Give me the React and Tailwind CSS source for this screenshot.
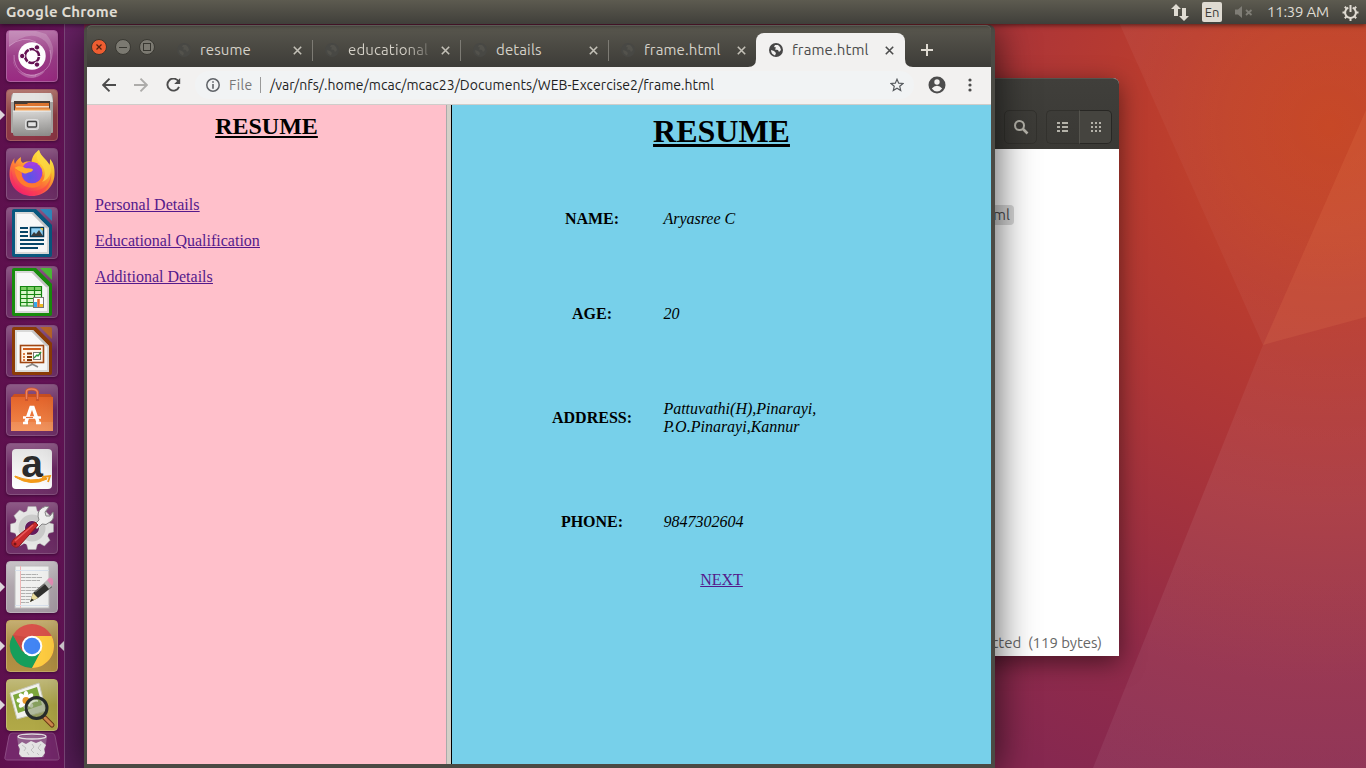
import React from "react";

const UI = "font-['Ubuntu','Noto_Sans','Open_Sans',sans-serif]";

function Wallpaper() {
  return (
    <svg className="absolute inset-0" width="1366" height="768" viewBox="0 0 1366 768">
      <defs>
        <linearGradient id="wl" x1="0" y1="0" x2="0" y2="1">
          <stop offset="0" stopColor="#6a2266" />
          <stop offset="1" stopColor="#571d58" />
        </linearGradient>
        <radialGradient id="wr" gradientUnits="userSpaceOnUse" cx="1330" cy="125" r="700">
          <stop offset="0" stopColor="#c74827" />
          <stop offset="0.15" stopColor="#c1432a" />
          <stop offset="0.26" stopColor="#ba3c2e" />
          <stop offset="0.45" stopColor="#ae3637" />
          <stop offset="0.65" stopColor="#9e3040" />
          <stop offset="0.8" stopColor="#912b49" />
          <stop offset="1" stopColor="#862850" />
        </radialGradient>
        <radialGradient id="wo" gradientUnits="userSpaceOnUse" cx="1330" cy="125" r="640">
          <stop offset="0" stopColor="#fff" stopOpacity="0" />
          <stop offset="0.3" stopColor="#fff" stopOpacity="0.04" />
          <stop offset="0.6" stopColor="#fff" stopOpacity="0.07" />
          <stop offset="1" stopColor="#fff" stopOpacity="0.06" />
        </radialGradient>
      </defs>
      <rect width="84" height="768" fill="url(#wl)" />
      <rect x="84" width="1282" height="768" fill="url(#wr)" />
      <path d="M1109 0H1366V768H1093L1263 345Z" fill="url(#wo)" />
      <path d="M1366 110L1263 345L1366 317Z" fill="#f08a60" fillOpacity="0.15" />
    </svg>
  );
}

function TopPanel() {
  return (
    <header className={`relative z-30 flex h-6 items-center bg-gradient-to-b from-[#5d5b50] to-[#403f3a] pl-[6px] pr-[7px] text-[#dfdbd2] shadow-[0_1px_5px_rgba(0,0,0,0.6)] ${UI}`}>
      <span className="text-[15px] font-bold leading-6 tracking-[0.22px]">Google Chrome</span>
      <div className="ml-auto flex items-center">
        <svg width="18" height="18" viewBox="0 0 18 18" fill="#dfdbd2">
          <path d="M5 1L10 6H7V13H3V6H0ZM13 18L8 13H11V5H15V13H18Z" />
        </svg>
        <span className="ml-[13px] flex h-5 w-5 items-center justify-center rounded-[2px] bg-[#dfdbd2] text-[13px] leading-5 text-[#3c3b37]">En</span>
        <svg className="ml-[13px]" width="18" height="14" viewBox="0 0 18 14">
          <path d="M0 4.5H3L7 1V13L3 9.5H0Z" fill="#7f7d76" />
          <path d="M11 5L16.5 10M16.5 5L11 10" stroke="#7f7d76" strokeWidth="1.8" />
        </svg>
        <span className="ml-[14px] w-[63px] whitespace-nowrap text-[15px] leading-6 tracking-[-0.25px]">11:39 AM</span>
        <svg className="ml-[12px]" width="17" height="17" viewBox="0 0 17 17" fill="none" stroke="#dfdbd2">
          <path d="M6.3 3.6A5.4 5.4 0 1 0 10.7 3.6" strokeWidth="2" />
          <path d="M8.5 1V8" strokeWidth="2" />
          <path d="M2.8 2.8L4.6 4.6M14.2 2.8L12.4 4.6M0.5 8.5H3M14 8.5H16.5M2.8 14.2L4.6 12.4M14.2 14.2L12.4 12.4M8.5 14V17" strokeWidth="2" />
        </svg>
      </div>
    </header>
  );
}

function Swirl() {
  return (
    <svg width="52" height="52" viewBox="0 0 52 52">
      <path d="M3 17Q23 -2 39 11Q46 18 44 33Q52 18 40 4L30 1H3Z" fill="#fff" fillOpacity="0.2" />
      <path d="M7 27C6 43 22 49 39 41C28 55 8 47 7 27Z" fill="#fff" fillOpacity="0.25" />
      <path d="M3 16Q17 5 30 12M44 20Q49 39 29 45M8 25Q8 45 30 46" stroke="#e0b4d8" strokeOpacity="0.5" fill="none" />
      <circle cx="26" cy="26" r="13.7" fill="#fff" />
      <circle cx="26" cy="26" r="7" fill="none" stroke="#651253" strokeWidth="2.6" strokeDasharray="13.7 0.96" strokeDashoffset="-1" />
      <g fill="#651253" stroke="#fff" strokeWidth="1">
        <circle cx="16.2" cy="26" r="2.7" /><circle cx="31" cy="17.4" r="2.7" /><circle cx="31" cy="34.6" r="2.7" />
      </g>
    </svg>
  );
}

function FilesIcon() {
  return (
    <svg width="52" height="52" viewBox="0 0 52 52">
      <defs><linearGradient id="cab" x1="0" y1="0" x2="0" y2="1"><stop stopColor="#d6d5d3" /><stop offset="1" stopColor="#8e8d8b" /></linearGradient></defs>
      <path d="M5 9Q5 4 9 4H43Q47 4 47 9V43Q47 44 46 44H6Q5 44 5 43Z" fill="#a8a6a3" />
      <path d="M7 4H45L47 13H5Z" fill="#e4e3e1" />
      <rect x="8" y="12" width="36" height="10" fill="#463b35" />
      <path d="M9 15H21L22 14H43V22H9Z" fill="#dd7530" />
      <rect x="10" y="17" width="33" height="1.500" fill="#f3e0cc" />
      <path d="M9 19.500H44V22H9Z" fill="#efa053" />
      <path d="M7 22H45V45Q45 47 43 47H9Q7 47 7 45Z" fill="url(#cab)" />
      <path d="M7 22H45" stroke="#f6f5f4" />
      <rect x="19.500" y="30.500" width="13" height="10" rx="2" fill="#d0d0d0" stroke="#dedede" />
      <rect x="21.500" y="32.500" width="9" height="5.500" rx="1" fill="#e2e2e2" stroke="#444" strokeWidth="1.400" />
    </svg>
  );
}

function FirefoxIcon() {
  return (
    <svg width="52" height="52" viewBox="0 0 52 52">
      <defs>
        <linearGradient id="ff" x1="0.85" y1="0.05" x2="0.25" y2="1">
          <stop stopColor="#fff14f" /><stop offset="0.3" stopColor="#ffc32e" /><stop offset="0.6" stopColor="#ff7139" /><stop offset="1" stopColor="#eb1878" />
        </linearGradient>
        <radialGradient id="ffp" cx="0.4" cy="0.7" r="0.8"><stop stopColor="#5a55e8" /><stop offset="1" stopColor="#a63be0" /></radialGradient>
      </defs>
      <path d="M33 2C30 4 26 8 25.500 14C22 13 18 14 17 15C15 14 14.500 12 15 9C12 11 10 13 9 16C8 14 8 12 8.500 10C5 15 3.500 20 3.500 27C4 39 13 48 26 48C39 48 48 38 48.500 27C49 19 47 14 44 11C44 14 44 15 43.500 17C41 11 34 8 33 2Z" fill="url(#ff)" />
      <path d="M5 22C8 31 7 42 26 43C38 43 45 35 45 24C47 38 37 47 26 47C12 47 4 36 5 22Z" fill="#ff2d55" fillOpacity="0.4" />
      <circle cx="26" cy="25" r="10.500" fill="url(#ffp)" />
      <path d="M17 19C19 13 27 12 33 16.500C30 16 28 17 28 18C25 17 21 17 19 20Z" fill="#a23fe0" />
      <path d="M8.500 20C12 17 17 18.500 19 20C22 20.500 27 20 27 22C26 24.500 21 24.500 20 25.500C18 26 15 24 8.500 20Z" fill="#ffae2e" />
      <path d="M8.500 20C12 23 14 24 15.500 25C15 31 20 36 27 35.500C33 35 37 30 36 24C40 31 37 38 29 39.500C15 41 9 30 8.500 20Z" fill="#ff7a2f" />
      <path d="M33 2C29 8 31 13 35.500 17C40 22 40 30 36 34C45 31 47 20 43 16Q35 9 33 2Z" fill="#ffdb45" fillOpacity="0.75" />
    </svg>
  );
}

function OfficeIcon({ color, light, children }) {
  return (
    <svg width="52" height="52" viewBox="0 0 52 52">
      <path d="M8 2H30L46 18V48Q46 50 44 50H8Q6 50 6 48V4Q6 2 8 2Z" fill={color} />
      <path d="M9 5H27L43 21V47H9Z" fill="#d9d9d8" />
      <path d="M11 7H26L41 22V45H11Z" fill="#f8f8f8" />
      <path d="M27 5L43 21H40L25 6Z" fill="#c6c6c6" />
      <path d="M34 2H44Q46 2 46 4V14Z" fill={light} />
      {children}
    </svg>
  );
}

const Writer = () => (
  <OfficeIcon color="#09587f" light="#3189bd">
    <path d="M14 21H22M14 25H22M14 29H22M14 33H38M14 37H38M14 41H32" stroke="#064568" strokeWidth="2" />
    <rect x="24.500" y="20.500" width="13" height="9" fill="#8fd0f3" stroke="#063b58" strokeWidth="1.500" />
    <path d="M25 29L28 25L30 27L33 23L37 29Z" fill="#3b3b39" /><path d="M34 21H37V24Z" fill="#e8c43a" />
  </OfficeIcon>
);

const Calc = () => (
  <OfficeIcon color="#188c0d" light="#4dbb38">
    <rect x="14" y="20" width="22" height="20" fill="#d9f7cb" />
    <path d="M14 20H36V24H14Z" fill="#80d067" />
    <path d="M14.500 20V40M21 20V40M28.500 20V40M35.500 20V31M14 20.500H36M14 24.500H36M14 28.500H36M14 32.500H28M14 36.500H28M14 40H28" stroke="#168612" strokeWidth="1.200" />
    <rect x="27.500" y="31.500" width="10" height="10" fill="#fff" stroke="#777" />
    <path d="M29.500 36V41" stroke="#36a9ed" strokeWidth="3" /><path d="M32.500 33V41" stroke="#e66b29" strokeWidth="2.500" /><path d="M35.500 38V41" stroke="#edbd24" strokeWidth="3" />
  </OfficeIcon>
);

const Impress = () => (
  <OfficeIcon color="#8c3c07" light="#b66529">
    <path d="M26 37V39.500L20 42M26 39L32 42" stroke="#888" strokeWidth="1.800" fill="none" />
    <rect x="14.500" y="20.500" width="23" height="17" fill="#fff4e8" stroke="#a14713" strokeWidth="1.600" />
    <path d="M17 24H35" stroke="#ce5d1d" strokeWidth="2" />
    <path d="M17 29H19M17 32H19M17 35H19" stroke="#dd7c43" strokeWidth="2" /><path d="M21 28.500H26M21 32H26M21 35H26" stroke="#823507" strokeWidth="2" />
    <rect x="27.500" y="27.500" width="7" height="7" fill="#fff" stroke="#777" /><path d="M28 33L31 30L32 31L35 27" stroke="#28963c" fill="none" strokeWidth="1.300" />
  </OfficeIcon>
);

function SoftwareIcon() {
  return (
    <svg width="52" height="52" viewBox="0 0 52 52">
      <defs><linearGradient id="bag" x1="0" y1="0" x2="0" y2="1"><stop stopColor="#e4642b" /><stop offset="1" stopColor="#f28a4d" /></linearGradient></defs>
      <path d="M8 10H44L47 14H5Z" fill="#c94f20" /><path d="M5 13H47V47H5Z" fill="url(#bag)" /><path d="M5 38H47V47H5Z" fill="#fff" fillOpacity="0.1" />
      <path d="M20.500 17V8Q20.500 5 25.500 5T31.500 8V17" fill="none" stroke="#cc542e" strokeWidth="3" /><path d="M20.500 15V8Q20.500 5 25.500 5T31.500 8V15" fill="none" stroke="#ec8360" strokeWidth="1.400" />
      <path d="M20 38L25 23.500H27L32 38" fill="none" stroke="#fff" strokeWidth="3.500" />
      <path d="M17 39H22M30 39H35M17 33.500H35" stroke="#fff" strokeWidth="2.400" /><path d="M20 33.500H27" stroke="#e8703a" strokeWidth="1.200" />
    </svg>
  );
}

function AmazonIcon() {
  return (
    <div className="relative flex h-[40px] w-[40px] justify-center rounded-[4px] bg-gradient-to-b from-[#e4e4e4] to-white">
      <span className="-mt-[6px] h-[41px] font-['Liberation_Sans',sans-serif] text-[39px] font-bold leading-[41px] text-[#2b2b2b]">a</span>
      <svg className="absolute left-[2px] top-[25px]" width="38" height="12" viewBox="0 0 38 12">
        <path d="M1 3Q17 13 33 5L32 3.500Q17 9 1 2Z" fill="#f39a18" stroke="#f39a18" />
        <path d="M28 3L36 2L34 8" stroke="#f39a18" strokeWidth="1.800" fill="none" />
      </svg>
    </div>
  );
}

function SettingsIcon() {
  const teeth = [0, 45, 90, 135, 180, 225, 270, 315];
  return (
    <svg width="52" height="52" viewBox="0 0 52 52">
      {teeth.map((a) => <path key={a} d="M20 12L22 4.500H30L32 12Z" fill="#e8e8e7" stroke="#aaa" strokeWidth="0.500" transform={`rotate(${a} 26 26)`} />)}
      <circle cx="26" cy="26" r="12" fill="none" stroke="#e5e5e4" strokeWidth="11" />
      <circle cx="26" cy="26" r="10.500" fill="none" stroke="#cbcbca" strokeWidth="6" />
      <circle cx="26" cy="26" r="7" fill="#631c5d" />
      <path d="M28 23L33 18Q30 10 36 6Q40 3 43 5L39 10L40 14L44 14L47 10Q49 17 44 20Q40 24 36 22L31 27Z" fill="#f1f1f0" stroke="#888" />
      <path d="M29 20L32 23L14 43Q11 47 7 44Q4 41 8 37Z" fill="#c92b2d" stroke="#8f1b20" />
      <path d="M27 23L9 39" stroke="#ea5d5d" strokeWidth="1.500" /><circle cx="9" cy="42" r="1.500" fill="#731519" />
    </svg>
  );
}

function GeditIcon() {
  return (
    <svg width="52" height="52" viewBox="0 0 52 52">
      <rect x="9" y="5" width="34" height="42" fill="#f1f1f0" stroke="#bcbcbc" />
      <path d="M14.500 5V47" stroke="#eeb6b6" /><path d="M9 9.500H43M9 44.500H43" stroke="#d7e0ec" />
      <path d="M15 13.500H32M15 16.500H36M15 19.500H34M15 26.500H36M15 29.500H31M15 32.500H32M15 35.500H26M15 38.500H24M15 41.500H23" stroke="#b0b0b0" strokeWidth="1" strokeDasharray="4 0.500 6 0.500" />
      <path d="M24 41L27 32L41 20L46 26L32 37Z" fill="#31312f" /><path d="M24 41L27 32L32 37Z" fill="#eadc9b" /><path d="M24 41L25.500 37.500L28 39Z" fill="#222" />
      <path d="M29 31L42 20" stroke="#737371" strokeWidth="1.500" /><path d="M38 22L41 19L46 25L43 28Z" fill="#b9b9b7" /><path d="M41 19L43 17Q46 16 47 19T46 25Z" fill="#e78fb8" />
    </svg>
  );
}

function ChromeIcon() {
  return (
    <svg width="52" height="52" viewBox="0 0 52 52">
      <circle cx="26" cy="26" r="22" fill="#d8524a" />
      <path d="M6.900 15A22 22 0 0 0 26 48L36 31L26 36L16 31Z" fill="#169e5b" />
      <path d="M26 16H45.600A22 22 0 0 1 26 48L35 31Z" fill="#ffcd41" />
      <path d="M7 15L16.500 31L20 17Z" fill="#b83d35" fillOpacity="0.4" />
      <circle cx="26" cy="26" r="10.300" fill="#fff" /><circle cx="26" cy="26" r="8.300" fill="#4285f4" />
    </svg>
  );
}

function ViewerIcon() {
  return (
    <svg width="52" height="52" viewBox="0 0 52 52">
      <path d="M4 14L33 4L40 32L11 40Z" fill="#f2f2ed" stroke="#c7c7b7" /><path d="M7 16L31 8L36 26L12 34Z" fill="#7da83c" />
      {[0, 45, 90, 135, 180, 225, 270, 315].map((a) => <ellipse key={a} cx="20" cy="16.500" rx="2.400" ry="4.500" fill="#fff" transform={`rotate(${a} 20 21.500)`} />)}
      <circle cx="20" cy="21.500" r="3.500" fill="#e69728" />
      <path d="M38 38L46 46" stroke="#6d3b17" strokeWidth="5" strokeLinecap="round" /><path d="M39 39L46 46" stroke="#d28a4d" strokeWidth="3" strokeLinecap="round" />
      <circle cx="30.500" cy="29" r="10.500" fill="#8d9b70" fillOpacity="0.65" stroke="#282d2b" strokeWidth="3" /><path d="M23 27Q25 21 32 22" stroke="#d8e0ca" strokeWidth="1.500" fill="none" />
    </svg>
  );
}

function Launcher() {
  const glass = "from-[#8d5a86] via-[#6b2763] to-[#6f3168] border-[#85507e]";
  const items = [
    { icon: <Swirl />, bg: "from-[#b874aa] via-[#9c3e89] to-[#9a2a82] border-[#ae5f9f]" },
    { icon: <FilesIcon />, bg: "from-[#b27770] via-[#8c3e44] to-[#8c3545] border-[#a45c60]", run: true },
    { icon: <FirefoxIcon />, bg: glass },
    { icon: <Writer />, bg: glass },
    { icon: <Calc />, bg: glass },
    { icon: <Impress />, bg: glass },
    { icon: <SoftwareIcon />, bg: glass },
    { icon: <AmazonIcon />, bg: glass },
    { icon: <SettingsIcon />, bg: glass },
    { icon: <GeditIcon />, bg: "from-[#c7c2c6] via-[#b0a6ad] to-[#a69ba4] border-[#bcb1ba]", run: true },
    { icon: <ChromeIcon />, bg: "from-[#c5ae71] via-[#a98b42] to-[#b39043] border-[#c4a965]", run: true, focus: true },
    { icon: <ViewerIcon />, bg: "from-[#c0b979] via-[#aaa244] to-[#b1a947] border-[#c3bb6e]", run: true },
  ];
  return (
    <nav className="relative z-10 flex h-[744px] w-[65px] flex-col gap-[7px] border-r border-[#804b7e] bg-gradient-to-r from-[#5d104d] to-[#68145b] pl-[6px] pt-[6px]">
      {items.map((it, i) => (
        <div key={i} className={`relative flex h-[52px] w-[52px] shrink-0 items-center justify-center rounded-[4px] border bg-gradient-to-b shadow-[0_1px_3px_rgba(30,0,30,0.5)] ${it.bg}`}>
          <div className="-m-px flex h-[52px] w-[52px] shrink-0 items-center justify-center">{it.icon}</div>
          {it.run && <svg className="absolute -left-[7px] top-[20px]" width="5" height="10" viewBox="0 0 5 10"><path d="M0 0L5 5L0 10Z" fill="#ddd5db" /></svg>}
          {it.focus && <svg className="absolute -right-[7px] top-[20px]" width="5" height="10" viewBox="0 0 5 10"><path d="M5 0L0 5L5 10Z" fill="#ddd5db" /></svg>}
        </div>
      ))}
      <svg className="-ml-[2px] -mt-[6px] shrink-0" width="56" height="31" viewBox="0 0 56 31">
        <path d="M8 1H48Q50 1 51 4L55 25Q56 28 52 28H4Q0 28 1 25L5 4Q6 1 8 1Z" fill="#74286b" stroke="#8c4c84" />
        <path d="M13 5Q28 1 43 5L40 25Q28 27 16 25Z" fill="#c0b4c0" fillOpacity="0.4" />
        <ellipse cx="28" cy="4.500" rx="14" ry="2.500" fill="none" stroke="#e4dfe3" strokeWidth="1.300" />
        <path d="M14 13L18 10L22 12L27 9L32 11L37 9L42 13L40 17L41 21L38 25H18L15 22L16 17Z" fill="#e4e4e4" />
        <path d="M18 13L22 16L20 19M28 12L30 15L27 18L30 21M37 12L34 16L37 19M23 20L25 23M33 21L35 23" stroke="#bcbcbc" strokeWidth="0.900" fill="none" />
      </svg>
    </nav>
  );
}

function FilesWindow() {
  return (
    <section className={`absolute left-[900px] top-[78px] z-0 flex h-[578px] w-[219px] flex-col rounded-tr-[6px] bg-white shadow-[0_6px_24px_rgba(0,0,0,0.5)] ${UI}`}>
      <div className="flex h-[71px] items-end justify-end rounded-tr-[6px] border-t border-[#55544e] bg-gradient-to-b from-[#403f3b] to-[#3a3935] pb-[5px] pr-[7px]">
        <div className="mr-[9px] flex h-[34px] w-[33px] items-center justify-center rounded-[5px] border border-[#32312d]">
          <svg width="16" height="16" viewBox="0 0 16 16" fill="none" stroke="#b4b2a9"><circle cx="6.500" cy="6.500" r="4.500" strokeWidth="2" /><path d="M10 10L14.500 14.500" strokeWidth="2.600" /></svg>
        </div>
        <div className="flex h-[34px] w-[33px] items-center justify-center rounded-l-[5px] border border-r-0 border-[#32312d] pr-px">
          <svg width="12" height="10" viewBox="0 0 12 10" fill="#b4b2a9"><path d="M0 0H3V2H0ZM5 0H11V2H5ZM0 4H3V6H0ZM5 4H11V6H5ZM0 8H3V10H0ZM5 8H11V10H5Z" /></svg>
        </div>
        <div className="flex h-[34px] w-[33px] items-center justify-center rounded-r-[5px] border border-[#282724] border-l-[#55544e] bg-[#45443f]">
          <svg width="10" height="10" viewBox="0 0 10 10" fill="#b4b2a9"><path d="M0 0H2V2H0ZM4 0H6V2H4ZM8 0H10V2H8ZM0 4H2V6H0ZM4 4H6V6H4ZM8 4H10V6H8ZM0 8H2V10H0ZM4 8H6V10H4ZM8 8H10V10H8Z" /></svg>
        </div>
      </div>
      <div className="flex flex-1 flex-col items-end pt-[56px]">
        <span className="mr-[105px] h-5 rounded-[4px] bg-[#d9d9d9] pl-2 pr-1 text-[15px] leading-5 text-[#4c4c4c]">ml</span>
        <span className="mb-[3px] mr-[17px] mt-auto whitespace-pre text-[15px] leading-5 tracking-[-0.05px] text-[#666]">cted  (119 bytes)</span>
      </div>
    </section>
  );
}

function Globe({ active }) {
  return (
    <svg className="shrink-0" width="14" height="14" viewBox="0 0 14 14">
      <circle cx="7" cy="7" r="7" fill={active ? "#474747" : "#484844"} />
      <path d="M2 7L5 8L7 10L6 12.500Q2 11 2 7ZM6 2L9 2Q12 4 12 7L10 9L9 7L6 6.500L7 4.500L5 4Z" fill={active ? "#f2f1f0" : "#53524c"} />
    </svg>
  );
}

function Close({ color }) {
  return <svg className="shrink-0" width="9" height="9" viewBox="0 0 9 9"><path d="M0.800 0.800L8.200 8.200M8.200 0.800L0.800 8.200" stroke={color} strokeWidth="1.600" /></svg>;
}

function Tab({ title, last, fade }) {
  return (
    <div className="flex w-[148px] shrink-0 items-center pl-[12px]">
      <Globe />
      <span className={`ml-[9px] w-[84px] overflow-hidden whitespace-nowrap text-[15px] leading-5 tracking-[0.12px] ${fade ? "bg-gradient-to-r from-[#d5d1c8] from-70% to-[#4b4a44] to-105% bg-clip-text text-transparent" : "text-[#d5d1c8]"}`}>{title}</span>
      <span className="ml-[8.5px] flex"><Close color="#c3c0b7" /></span>
      {!last && <span className="ml-[10.5px] h-[21px] w-px bg-[#7d7b74]" />}
    </div>
  );
}

function TitleBar() {
  return (
    <div className="flex h-[42px] items-end rounded-t-[5px] border-t border-[#7b7a72] bg-gradient-to-b from-[#59574e] to-[#3d3c38]">
      <div className="mb-[12px] ml-[4px] flex gap-2">
        <svg width="16" height="16" viewBox="0 0 16 16"><circle cx="8" cy="8" r="7.500" fill="#ee5d31" stroke="#38362f" /><path d="M5.500 5.500L10.500 10.500M10.500 5.500L5.500 10.500" stroke="#55210f" strokeWidth="1.200" /></svg>
        <svg width="16" height="16" viewBox="0 0 16 16"><circle cx="8" cy="8" r="7.500" fill="#7b7971" stroke="#393832" /><path d="M4 8.500H12" stroke="#383731" /></svg>
        <svg width="16" height="16" viewBox="0 0 16 16"><circle cx="8" cy="8" r="7.500" fill="#7b7971" stroke="#393832" /><rect x="4.500" y="4.500" width="7" height="7" fill="none" stroke="#383731" /></svg>
      </div>
      <div className="ml-[10px] flex h-[34px] items-center">
        <Tab title="resume" />
        <Tab title="educational" fade />
        <Tab title="details" />
        <Tab title="frame.html" last />
      </div>
      <div className="relative -ml-px flex h-[34px] w-[149px] items-center rounded-t-[8px] bg-[#f2f1f0] pl-[13px]">
        <svg className="absolute -left-[8px] bottom-0" width="8" height="8"><path d="M8 0V8H0Q8 8 8 0Z" fill="#f2f1f0" /></svg>
        <svg className="absolute -right-[8px] bottom-0" width="8" height="8"><path d="M0 0V8H8Q0 8 0 0Z" fill="#f2f1f0" /></svg>
        <Globe active />
        <span className="ml-[9px] w-[84px] whitespace-nowrap text-[15px] leading-5 tracking-[0.12px] text-[#4c4c4c]">frame.html</span>
        <span className="ml-[8.5px] flex"><Close color="#4c4c4c" /></span>
      </div>
      <svg className="mb-[11px] ml-[16px]" width="12" height="12" viewBox="0 0 12 12"><path d="M6 0V12M0 6H12" stroke="#dfdbd2" strokeWidth="2" /></svg>
    </div>
  );
}

function Toolbar() {
  return (
    <div className="flex h-[38px] items-center border-b border-[#cfcdca] bg-[#f2f1f0] pb-px">
      <svg className="ml-[15px]" width="14" height="14" viewBox="0 0 14 14"><path d="M14 7H1.500M7.500 0.700L1.200 7L7.500 13.300" fill="none" stroke="#4c4c4c" strokeWidth="1.900" /></svg>
      <svg className="ml-[18px]" width="14" height="14" viewBox="0 0 14 14"><path d="M0 7H12.500M6.500 0.700L12.800 7L6.500 13.300" fill="none" stroke="#adacaa" strokeWidth="1.900" /></svg>
      <svg className="ml-[18px]" width="15" height="14" viewBox="0 0 15 14"><path d="M12.600 3.600A6 6 0 1 0 13 8.800" fill="none" stroke="#4c4c4c" strokeWidth="1.900" /><path d="M14.200 0V6H8.200Z" fill="#4c4c4c" /></svg>
      <div className="ml-[14px] flex h-[28px] w-[719px] items-center rounded-full bg-[#f1f3f4] pl-[11px] pr-[10px]">
        <svg width="14" height="14" viewBox="0 0 14 14"><circle cx="7" cy="7" r="6.200" fill="none" stroke="#5f6368" strokeWidth="1.500" /><path d="M7 3.200V4.800M7 6V10.800" stroke="#5f6368" strokeWidth="1.600" /></svg>
        <span className="ml-[9px] w-[31px] whitespace-nowrap text-[14px] leading-5 tracking-[0.35px] text-[#777]">File</span>
        <span className="h-4 w-px bg-[#999]" />
        <span className="ml-[9px] whitespace-nowrap text-[14px] leading-5 tracking-[0.04px] text-[#1f1f1f]">/var/nfs/.home/mcac/mcac23/Documents/WEB-Excercise2/frame.html</span>
        <svg className="ml-auto" width="14" height="14" viewBox="0 0 24 24"><path d="M12 2L14.900 8.800L22.300 9.400L16.700 14.200L18.400 21.500L12 17.600L5.600 21.500L7.300 14.200L1.700 9.400L9.100 8.800Z" fill="none" stroke="#54585c" strokeWidth="2" /></svg>
      </div>
      <svg className="ml-[14px]" width="18" height="18" viewBox="0 0 18 18"><circle cx="9" cy="9" r="8.500" fill="#4c4c4c" /><circle cx="9" cy="6" r="2.700" fill="#f2f1f0" /><path d="M3.800 12.500Q6 9.800 9 9.800T14.200 12.500Q12 15.500 9 15.500T3.800 12.500Z" fill="#f2f1f0" /></svg>
      <svg className="ml-[21.5px]" width="4" height="14" viewBox="0 0 4 14" fill="#4c4c4c"><circle cx="2" cy="2" r="1.600" /><circle cx="2" cy="7" r="1.600" /><circle cx="2" cy="12" r="1.600" /></svg>
    </div>
  );
}

function Row({ label, children, className = "" }) {
  return (
    <div className={`flex items-center ${className}`}>
      <b className="w-[120px] text-center">{label}</b>
      <i className="ml-[11.4px]">{children}</i>
    </div>
  );
}

function Page() {
  return (
    <div className="flex flex-1 font-['Liberation_Serif',serif] text-[16px] leading-[18px] text-black">
      <aside className="w-[359px] bg-[#ffc0cb] p-2">
        <h2 className="text-center text-[24px] font-bold leading-[27px] underline">RESUME</h2>
        <div className="mt-[56px] flex flex-col items-start gap-[18px] text-[#551a8b] underline">
          <a>Personal Details</a>
          <a>Educational Qualification</a>
          <a>Additional Details</a>
        </div>
      </aside>
      <div className="w-[6px] border-l border-r border-l-[#aaa] border-r-black bg-[#d4d0c8]" />
      <main className="flex-1 bg-[#77d0ea] pt-2">
        <h1 className="text-center text-[32px] font-bold leading-[37px] underline">RESUME</h1>
        <div className="ml-[80px] mt-[60px]">
          <Row label="NAME:">Aryasree C</Row>
          <Row label="AGE:" className="mt-[77px]">20</Row>
          <Row label="ADDRESS:" className="mt-[77px]">Pattuvathi(H),Pinarayi,<br />P.O.Pinarayi,Kannur</Row>
          <Row label="PHONE:" className="mt-[77px]">9847302604</Row>
        </div>
        <div className="mt-[40px] text-center text-[#551a8b] underline">NEXT</div>
      </main>
    </div>
  );
}

function ChromeWindow() {
  return (
    <section className={`absolute left-[84px] top-[25px] z-20 flex h-[743px] w-[911px] flex-col rounded-t-[6px] border-b-4 border-l-[3px] border-r-4 border-[#4b4a44] bg-[#4b4a44] shadow-[0_6px_40px_rgba(0,0,0,0.7)] ${UI}`}>
      <TitleBar />
      <Toolbar />
      <Page />
    </section>
  );
}

export default function App() {
  return (
    <div className="relative h-[768px] w-[1366px] overflow-hidden">
      <Wallpaper />
      <TopPanel />
      <Launcher />
      <FilesWindow />
      <ChromeWindow />
    </div>
  );
}
